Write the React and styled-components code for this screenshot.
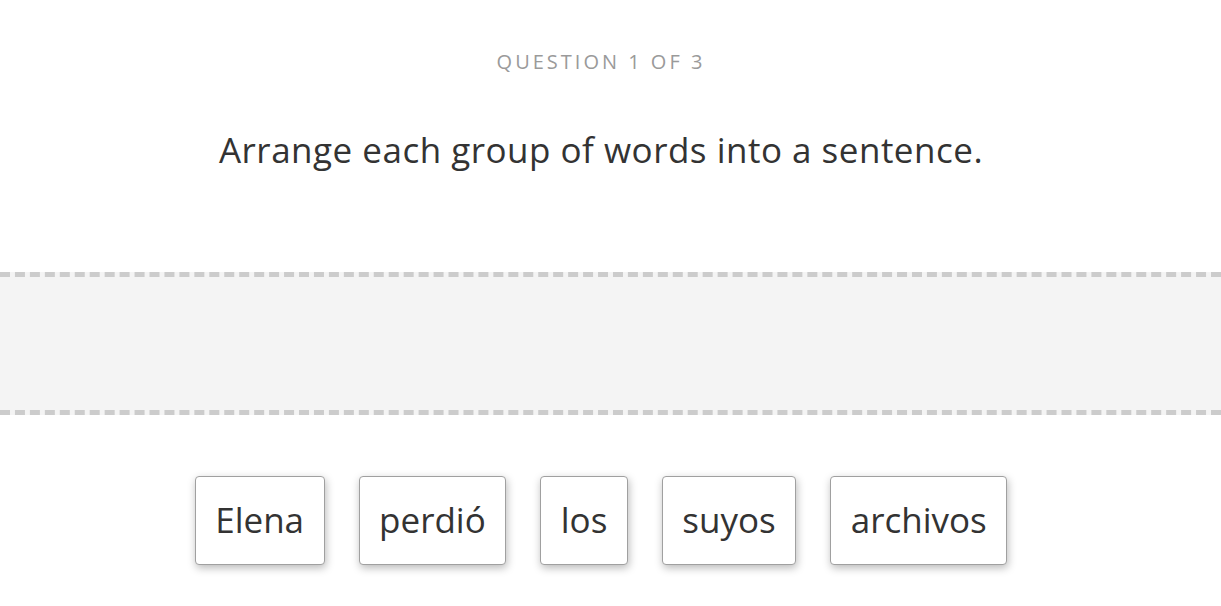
import styled, {createGlobalStyle} from "styled-components";

const GlobalStyle = createGlobalStyle`
   body {
      margin: 0;
      background: #fff;
      font-family: "Open Sans", "Noto Sans", sans-serif;
   }
`;

const Page = styled.main`
   width: 100%;
   display: flex;
   flex-direction: column;
   padding: 48px 0 40px;
`;

const Counter = styled.div`
   padding-right: 19px;
   text-align: center;
   font-size: 20px;
   line-height: 28px;
   letter-spacing: 3px;
   color: #9a9a9a;
   text-transform: uppercase;
`;

const Prompt = styled.h1`
   margin: 50px 0 0;
   padding-right: 19px;
   text-align: center;
   font-size: 35px;
   font-weight: 400;
   line-height: 48px;
   letter-spacing: 0.5px;
   color: #333;
`;

const DropZone = styled.div`
   margin-top: 98px;
   height: 133px;
   background: #f4f4f4;
   border-top: 5px dashed #cccccc;
   border-bottom: 5px dashed #cccccc;
`;

const Bank = styled.div`
   margin-top: 61px;
   padding-right: 19px;
   display: flex;
   justify-content: center;
   gap: 34px;
`;

const Word = styled.button`
   font-family: inherit;
   font-size: 35px;
   line-height: 48px;
   color: #333;
   background: #fff;
   padding: 19px 19.5px 20px;
   border: 1px solid #a0a0a0;
   border-radius: 4px;
   box-shadow: 1px 3px 8px rgba(0, 0, 0, 0.28);
   cursor: pointer;
`;

const words = ["Elena", "perdió", "los", "suyos", "archivos"];

export default function App() {
   return (
      <>
         <GlobalStyle />
         <Page>
            <Counter>Question 1 of 3</Counter>
            <Prompt>Arrange each group of words into a sentence.</Prompt>
            <DropZone />
            <Bank>
               {words.map((w) => (
                  <Word key={w}>{w}</Word>
               ))}
            </Bank>
         </Page>
      </>
   );
}
